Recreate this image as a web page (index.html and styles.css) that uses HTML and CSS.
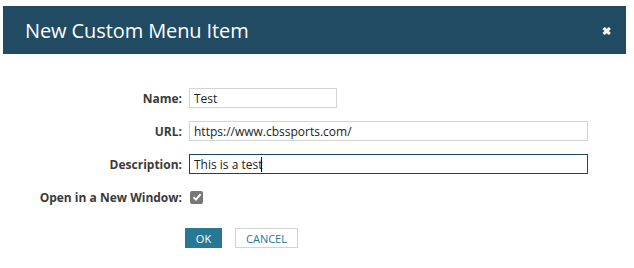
FILE: index.html
```html
<!DOCTYPE html>
<html lang="en">
<head>
  <meta charset="UTF-8" />
  <title>New Custom Menu Item</title>
  <link rel="stylesheet" href="styles.css">
</head>
<body>
  <div class="dialog">
    <header class="dialog-head">
      <h1>New Custom Menu Item</h1>
      <span class="close">&#10006;</span>
    </header>

    <form class="menu-form">
      <label for="name">Name:</label>
      <div><input id="name" class="short" type="text" value="Test"></div>

      <label for="url">URL:</label>
      <div><input id="url" type="text" value="https://www.cbssports.com/"></div>

      <label for="desc">Description:</label>
      <div><input id="desc" class="focused" type="text" value="This is a test"><span class="caret"></span></div>

      <label for="newwin">Open in a New Window:</label>
      <div><span class="check">
        <svg width="10" height="10" viewBox="0 0 10 10"><path d="M1.5 5.2 L4 7.6 L8.6 2.2" fill="none" stroke="#fff" stroke-width="1.9"/></svg>
      </span></div>
    </form>

    <div class="actions">
      <button class="btn ok">OK</button>
      <button class="btn cancel">CANCEL</button>
    </div>
  </div>
</body>
</html>
```

FILE: styles.css
```css
body {
  margin: 0;
  background: #fff;
  font-family: "Open Sans", "Noto Sans", sans-serif;
  color: #333;
}
.dialog {
  padding: 6px 8px 0 3px;
}
.dialog-head {
  background: #214a63;
  height: 48px;
  display: flex;
  align-items: center;
  justify-content: space-between;
  padding: 0 15px 0 22px;
}
.dialog-head h1 {
  margin: 0;
  font-size: 20px;
  font-weight: 400;
  color: #fff;
  letter-spacing: -0.1px;
}
.close {
  color: #fff;
  font-size: 11px;
  font-weight: bold;
}
.menu-form {
  display: grid;
  grid-template-columns: 179px 1fr;
  column-gap: 7px;
  row-gap: 13px;
  margin-top: 34px;
  align-items: center;
}
.menu-form label {
  text-align: right;
  font-size: 12px;
  font-weight: 700;
  color: #3a3a3a;
}
.menu-form > div {
  position: relative;
  height: 20px;
  display: flex;
  align-items: center;
}
.menu-form input {
  box-sizing: border-box;
  width: 399px;
  height: 20px;
  border: 1px solid #d3d3d3;
  padding: 0 4px;
  font-family: inherit;
  font-size: 12px;
  color: #222;
  outline: none;
}
.menu-form input.short {
  width: 148px;
}
.menu-form input.focused {
  border-color: #1f4559;
}
.caret {
  position: absolute;
  left: 72px;
  top: 3px;
  width: 1px;
  height: 15px;
  background: #111;
}
.check {
  margin-left: 1px;
  width: 13px;
  height: 13px;
  border-radius: 2px;
  background: #777;
  display: flex;
  align-items: center;
  justify-content: center;
}
.actions {
  display: flex;
  gap: 13px;
  margin: 21px 0 0 182px;
}
.btn {
  height: 20px;
  font-family: inherit;
  font-size: 11px;
  padding: 0;
  cursor: pointer;
}
.ok {
  width: 37px;
  background: #277893;
  border: none;
  color: #fff;
}
.cancel {
  width: 63px;
  background: #fff;
  border: 1px solid #d3d3d3;
  color: #277893;
}
```
